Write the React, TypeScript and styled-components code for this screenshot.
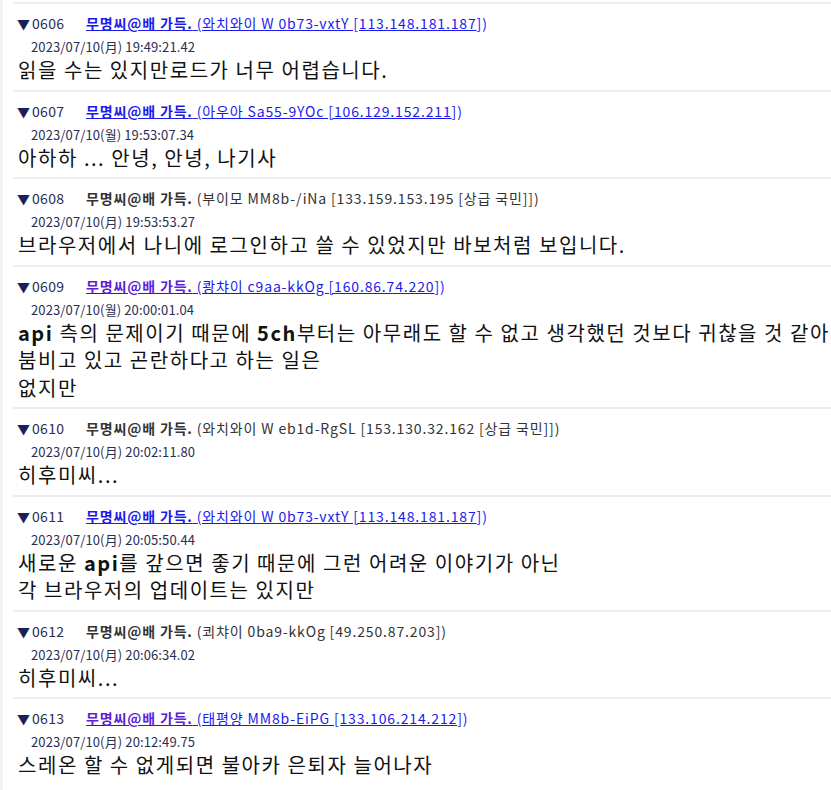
import styled, { createGlobalStyle } from "styled-components";

const GlobalStyle = createGlobalStyle`
  html, body {
    margin: 0;
    padding: 0;
    background: #ffffff;
  }
  body {
    font-family: "Noto Sans CJK KR", "Noto Sans", sans-serif;
    overflow: hidden;
  }
`;

const Page = styled.div`
  width: 831px;
  height: 790px;
  box-sizing: border-box;
  border-left: 3px solid #f2f2f2;
  padding: 2px 0 0 10px;
  overflow: hidden;
`;

const Post = styled.div`
  border-top: 2px solid #eeeeee;
  padding: 9px 0 6px 4px;
`;

const Head = styled.div`
  display: flex;
  align-items: baseline;
  font-size: 14px;
  line-height: 20px;
  color: #333;
  white-space: nowrap;
`;

const Arrow = styled.span`
  color: #1b1f5c;
  font-size: 13px;
  margin-right: 2px;
`;

const Num = styled.span`
  width: 54px;
  color: #2a2d55;
  letter-spacing: 0.3px;
`;

const Who = styled.span`
  letter-spacing: 0.85px;
`;

const Name = styled.b<{ $color?: string }>`
  font-weight: 700;
  color: ${(p) => p.$color || "#333"};
`;

const Link = styled.a`
  color: #1a1aee;
  text-decoration: underline;
  cursor: pointer;
`;

const Trip = styled.span<{ $color?: string }>`
  color: ${(p) => p.$color || "#333"};
`;

const Tail = styled.span`
  color: #1a1aee;
`;

const Date = styled.div`
  font-size: 13px;
  line-height: 19px;
  color: #2b2e52;
  padding-left: 14px;
  margin-top: 3px;
  letter-spacing: 0.12px;
`;

const Body = styled.div`
  font-size: 20px;
  line-height: 27.5px;
  letter-spacing: 1.55px;
  color: #111;
  padding-left: 1px;
  white-space: nowrap;
`;

const Latin = styled.span`
  font-weight: 600;
`;

type Item = {
  num: string;
  link: boolean;
  visited?: boolean;
  trip: string;
  date: string;
  lines: React.ReactNode[];
};

const posts: Item[] = [
  {
    num: "0606",
    link: true,
    trip: "(와치와이 W 0b73-vxtY [113.148.181.187",
    date: "2023/07/10(月) 19:49:21.42",
    lines: ["읽을 수는 있지만로드가 너무 어렵습니다."],
  },
  {
    num: "0607",
    link: true,
    trip: "(아우아 Sa55-9YOc [106.129.152.211",
    date: "2023/07/10(월) 19:53:07.34",
    lines: ["아하하 ... 안녕, 안녕, 나기사"],
  },
  {
    num: "0608",
    link: false,
    trip: "(부이모 MM8b-/iNa [133.159.153.195 [상급 국민]])",
    date: "2023/07/10(月) 19:53:53.27",
    lines: ["브라우저에서 나니에 로그인하고 쓸 수 있었지만 바보처럼 보입니다."],
  },
  {
    num: "0609",
    link: true,
    visited: true,
    trip: "(쾅챠이 c9aa-kkOg [160.86.74.220",
    date: "2023/07/10(월) 20:00:01.04",
    lines: [
      <>
        <Latin>api</Latin> 측의 문제이기 때문에 <Latin>5ch</Latin>부터는 아무래도 할 수 없고 생각했던 것보다 귀찮을 것 같아
      </>,
      "붐비고 있고 곤란하다고 하는 일은",
      "없지만",
    ],
  },
  {
    num: "0610",
    link: false,
    trip: "(와치와이 W eb1d-RgSL [153.130.32.162 [상급 국민]])",
    date: "2023/07/10(月) 20:02:11.80",
    lines: ["히후미씨..."],
  },
  {
    num: "0611",
    link: true,
    trip: "(와치와이 W 0b73-vxtY [113.148.181.187",
    date: "2023/07/10(月) 20:05:50.44",
    lines: [
      <>
        새로운 <Latin>api</Latin>를 갚으면 좋기 때문에 그런 어려운 이야기가 아닌
      </>,
      "각 브라우저의 업데이트는 있지만",
    ],
  },
  {
    num: "0612",
    link: false,
    trip: "(쾨챠이 0ba9-kkOg [49.250.87.203])",
    date: "2023/07/10(月) 20:06:34.02",
    lines: ["히후미씨..."],
  },
  {
    num: "0613",
    link: true,
    visited: true,
    trip: "(태평양 MM8b-EiPG [133.106.214.212",
    date: "2023/07/10(月) 20:12:49.75",
    lines: ["스레온 할 수 없게되면 불아카 은퇴자 늘어나자"],
  },
];

function PostHead({ p }: { p: Item }) {
  if (p.link) {
    return (
      <Head>
        <Arrow>▼</Arrow>
        <Num>{p.num}</Num>
        <Who>
          <Link>
            <Name $color={p.visited ? "#5b22d8" : "#1a1aee"}>무명씨@배 가득.</Name>{" "}
            <Trip $color="#1a1aee">{p.trip}</Trip>
          </Link>
          <Tail>])</Tail>
        </Who>
      </Head>
    );
  }
  return (
    <Head>
      <Arrow>▼</Arrow>
      <Num>{p.num}</Num>
      <Who>
        <Name>무명씨@배 가득.</Name> <Trip>{p.trip}</Trip>
      </Who>
    </Head>
  );
}

export default function App() {
  return (
    <>
      <GlobalStyle />
      <Page>
        {posts.map((p) => (
          <Post key={p.num}>
            <PostHead p={p} />
            <Date>{p.date}</Date>
            <Body>
              {p.lines.map((l, i) => (
                <div key={i}>{l}</div>
              ))}
            </Body>
          </Post>
        ))}
      </Page>
    </>
  );
}
